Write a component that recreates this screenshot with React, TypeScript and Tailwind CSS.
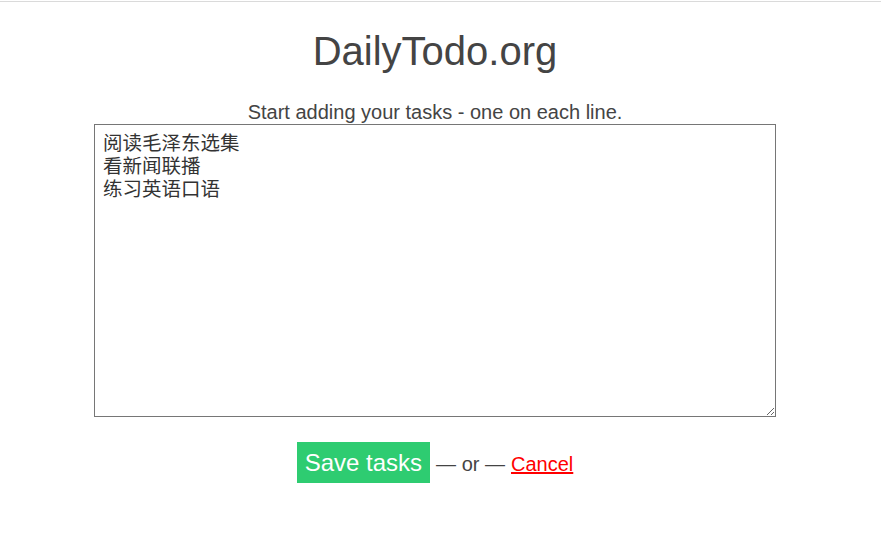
import { useState } from "react";

const initialTasks = "阅读毛泽东选集\n看新闻联播\n练习英语口语";

export default function App() {
  const [tasks, setTasks] = useState(initialTasks);

  return (
    <div className="min-h-[549px] bg-white pt-px font-['Liberation_Sans',Arial,sans-serif] text-[#444]">
      <div className="border-t border-[#dadada]" />
      <div className="flex flex-col items-center pr-[11px]">
        <h1 className="mt-[26px] text-[40px] leading-[46px] font-normal">DailyTodo.org</h1>

        <p className="mt-[27px] text-[20px] leading-[23px]">
          Start adding your tasks - one on each line.
        </p>

        <textarea
          value={tasks}
          onChange={(e) => setTasks(e.target.value)}
          className="h-[293px] w-[682px] resize border border-[#767676] px-2 py-[5px] font-['Noto_Sans_CJK_SC','Liberation_Serif',serif] text-[19.5px] leading-[23px] text-[#333] outline-none"
        />

        <div className="mt-[25px] flex items-baseline text-[20px]">
          <button className="bg-[#2ecc71] px-2 py-[7px] text-[24px] leading-[27px] text-white">
            Save tasks
          </button>
          <span className="ml-[6px]">— or —</span>
          <a href="#" className="ml-[6px] text-[#ff0000] underline">
            Cancel
          </a>
        </div>
      </div>
    </div>
  );
}
